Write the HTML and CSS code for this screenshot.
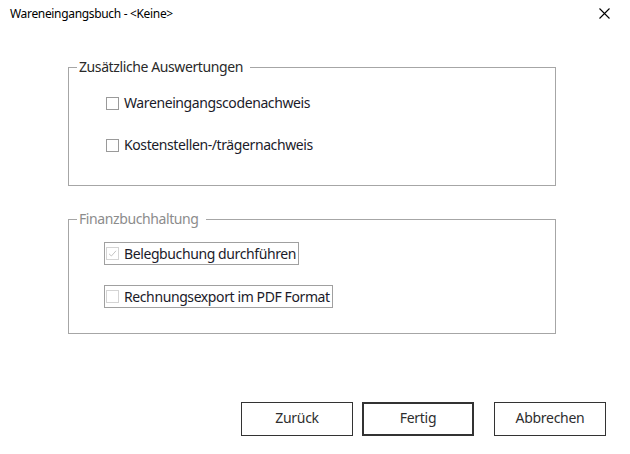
FILE: index.html
```html
<!DOCTYPE html>
<html lang="de">
<head>
<meta charset="utf-8">
<title>Wareneingangsbuch</title>
<link rel="stylesheet" href="styles.css">
</head>
<body>
<div class="dialog">
  <header class="titlebar">
    <span class="title">Wareneingangsbuch - &lt;Keine&gt;</span>
    <span class="close" aria-label="Schließen">
      <svg width="11" height="11" viewBox="0 0 11 11"><path d="M0.5 0.5 L10.5 10.5 M10.5 0.5 L0.5 10.5" stroke="#000" stroke-width="1.1" fill="none"/></svg>
    </span>
  </header>
  <main class="content">
    <fieldset class="group group-first">
      <legend class="legend">Zusätzliche Auswertungen</legend>
      <div class="rows">
        <label class="row"><span class="box"></span><span class="label">Wareneingangscodenachweis</span></label>
        <label class="row"><span class="box"></span><span class="label">Kostenstellen-/trägernachweis</span></label>
      </div>
    </fieldset>
    <fieldset class="group group-second">
      <legend class="legend legend-disabled">Finanzbuchhaltung</legend>
      <div class="rows rows-focus">
        <label class="row row-focus"><span class="box box-disabled">
          <svg width="9" height="9" viewBox="0 0 9 9"><path d="M1 4.8 L3.4 7 L8 1.8" stroke="#c4c4c4" stroke-width="1" fill="none"/></svg>
        </span><span class="label">Belegbuchung durchführen</span></label>
        <label class="row row-focus"><span class="box box-disabled"></span><span class="label">Rechnungsexport im PDF Format</span></label>
      </div>
    </fieldset>
  </main>
  <footer class="buttons">
    <button class="btn">Zurück</button>
    <button class="btn btn-default">Fertig</button>
    <button class="btn btn-cancel">Abbrechen</button>
  </footer>
</div>
</body>
</html>
```
FILE: styles.css
```css
html, body {
  margin: 0;
  padding: 0;
  background: #ffffff;
}
body {
  font-family: "Noto Sans", "Open Sans", sans-serif;
  color: #1e1e1e;
}
.dialog {
  width: 630px;
  height: 454px;
  display: flex;
  flex-direction: column;
}
.titlebar {
  height: 28px;
  display: flex;
  align-items: center;
  justify-content: space-between;
  padding: 0 20px 0 10px;
}
.title {
  font-size: 12px;
  letter-spacing: -0.33px;
  color: #000;
  line-height: 26px;
}
.close {
  display: flex;
  width: 11px;
  height: 11px;
  margin-top: -2px;
}
.content {
  padding-left: 68px;
  display: flex;
  flex-direction: column;
}
.group {
  margin: 0;
  width: 488px;
  box-sizing: border-box;
  border: 1px solid #a6a6a6;
  padding: 0 0 0 37px;
}
.group-first {
  margin-top: 30px;
  height: 128px;
}
.group-second {
  margin-top: 24px;
  height: 124px;
}
.legend {
  font-size: 14px;
  letter-spacing: -0.4px;
  line-height: 18px;
  padding: 0 7px 0 2px;
  margin-left: -29px;
  color: #2a2a2a;
}
.legend-disabled {
  color: #8c8c8c;
}
.rows {
  display: flex;
  flex-direction: column;
  gap: 18px;
  padding-top: 15px;
}
.rows-focus {
  gap: 20px;
  padding-top: 14px;
}
.row {
  display: flex;
  align-items: center;
  height: 24px;
  font-size: 14px;
  letter-spacing: -0.4px;
  color: #1b1b2a;
}
.row-focus {
  align-self: flex-start;
  height: 23px;
  box-sizing: border-box;
  border: 1px solid #a0a0a0;
  margin-left: -2px;
  padding: 0 2px 0 1px;
}
.box {
  width: 13px;
  height: 13px;
  box-sizing: border-box;
  border: 1px solid #9a9a9a;
  background: #fff;
  margin-right: 5px;
  display: flex;
  align-items: center;
  justify-content: center;
}
.box-disabled {
  border-color: #d4d4d4;
}
.label {
  line-height: 18px;
}
.buttons {
  display: flex;
  margin-top: 68px;
  padding-left: 241px;
}
.btn {
  width: 112px;
  height: 34px;
  box-sizing: border-box;
  background: #fff;
  border: 1px solid #333;
  font-family: "Noto Sans", "Open Sans", sans-serif;
  font-size: 14px;
  letter-spacing: -0.3px;
  color: #2e2e2e;
  padding: 0 0 4px 0;
  margin: 0;
}
.btn-default {
  border: 2px solid #333;
  margin-left: 9px;
}
.btn-cancel {
  margin-left: 20px;
}
```
